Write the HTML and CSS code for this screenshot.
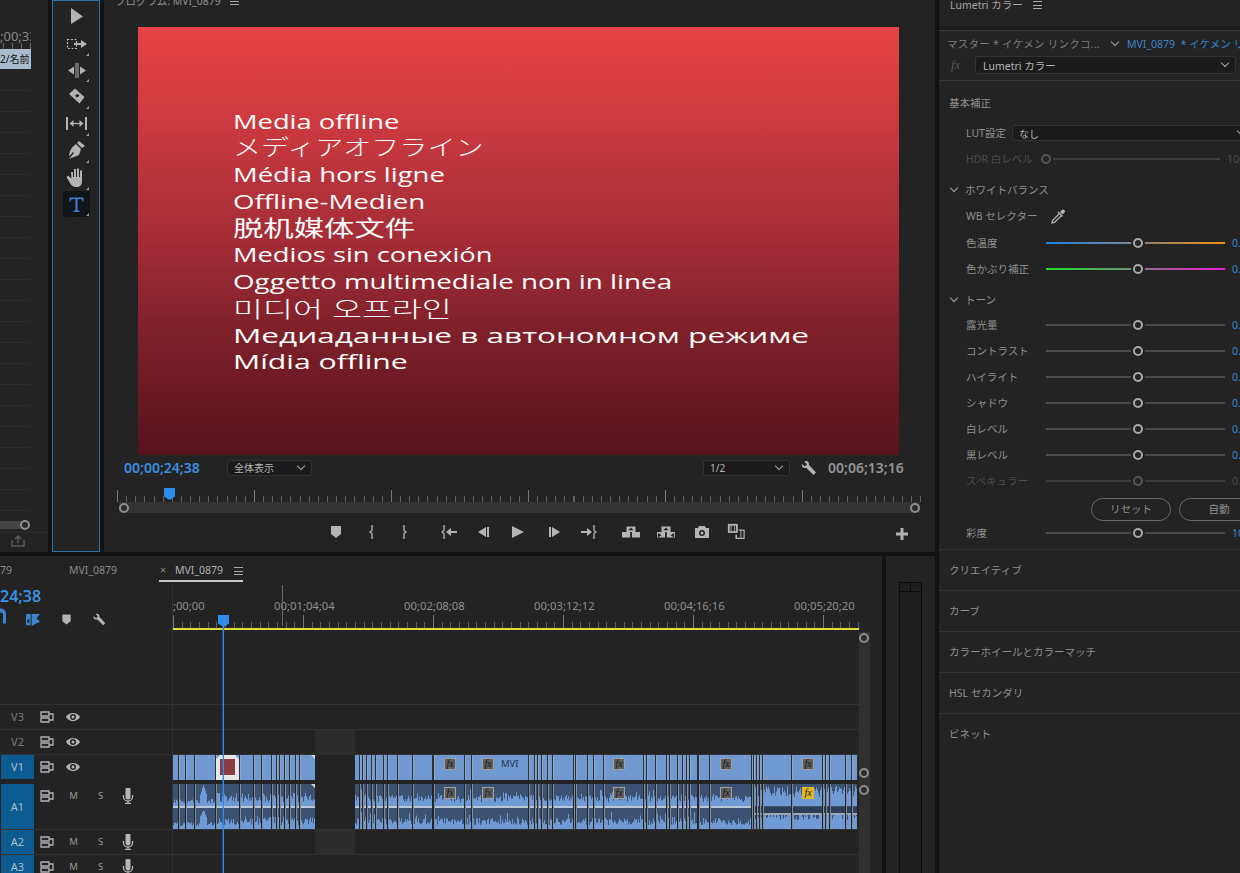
FILE: index.html
```html
<!DOCTYPE html>
<html lang="ja">
<head>
    <meta charset="UTF-8">
    <title>Premiere Pro - MVI_0879</title>
    <link rel="stylesheet" href="styles.css">
</head>
<body>
    <svg class="icon-defs" width="0" height="0">
        <symbol id="i-marker" viewBox="0 0 18 18"><path d="M4 3h10v8l-5 4-5-4z"/></symbol>
        <symbol id="i-in" viewBox="0 0 18 18"><path class="ln" d="M10 3H9v4.500L7 9l2 1.500V15h1"/></symbol>
        <symbol id="i-out" viewBox="0 0 18 18"><path class="ln" d="M8 3h1v4.500L11 9l-2 1.500V15H8"/></symbol>
        <symbol id="i-goin" viewBox="0 0 18 18"><path class="ln" d="M4 3H3v4.500L1 9l2 1.500V15h1"/><path d="M5 9l5-4v3h6v2h-6v3z"/></symbol>
        <symbol id="i-goout" viewBox="0 0 18 18"><path class="ln" d="M14 3h1v4.500L17 9l-2 1.500V15h-1"/><path d="M13 9L8 5v3H2v2h6v3z"/></symbol>
        <symbol id="i-back" viewBox="0 0 18 18"><path d="M3 9l8-5v10zM12 4h2v10h-2z"/></symbol>
        <symbol id="i-fwd" viewBox="0 0 18 18"><path d="M15 9L7 4v10zM4 4h2v10H4z"/></symbol>
        <symbol id="i-play" viewBox="0 0 18 18"><path d="M3 3l12 6-12 6z"/></symbol>
        <symbol id="i-lift" viewBox="0 0 20 18"><path d="M5 3h10v6H5zM0 9h9v6H0zM11 9h9v6h-9z"/><path class="cut" d="M10 4l3 3H7z"/></symbol>
        <symbol id="i-extract" viewBox="0 0 20 18"><path d="M5 3h10v6H5zM0 9h9v6H0zM11 9h9v6h-9z"/><path class="cut" d="M10 4l3 3H7zM1 10l4 2.500L1 15zM19 10l-4 2.500 4 2.500z"/></symbol>
        <symbol id="i-camera" viewBox="0 0 18 18"><path d="M2 5h3l1-2h6l1 2h3v10H2z"/><circle class="cut" cx="9" cy="10" r="3"/><circle cx="9" cy="10" r="1.500"/></symbol>
        <symbol id="i-compare" viewBox="0 0 20 20"><path d="M1 1h11v10H1z"/><path class="cut" d="M3 3h7v6H3z"/><path d="M4 3h1v6H4zM8 3h1v6H8z"/><path class="ln" d="M13 8h6v9h-9v-4"/><path d="M10 13h1v4h-1zM15 8h1v9h-1z"/></symbol>
        <symbol id="i-plus" viewBox="0 0 18 18"><path d="M7.500 3h3v4.500H15v3h-4.500V15h-3v-4.500H3v-3h4.500z"/></symbol>
        <symbol id="i-wrench" viewBox="0 0 18 18"><path d="M2 5l3 2.500 2-2L4.500 2.500C7 1 9.500 3 9 6l7 7.500-2.500 2.500L6.500 9C3.500 9.500 1 7.500 2 5z"/></symbol>
        <symbol id="i-track" viewBox="0 0 14 12"><path class="ln" d="M1 1h8v4H1zM1 7h8v4H1zM9 3h4v6H9"/></symbol>
        <symbol id="i-eye" viewBox="0 0 14 12"><path d="M0 6c3-5.500 11-5.500 14 0-3 5.500-11 5.500-14 0z"/><circle class="cut" cx="7" cy="6" r="3"/><circle cx="7" cy="6" r="1.500"/></symbol>
        <symbol id="i-mic" viewBox="0 0 12 16"><path d="M3.500 1.500a2.500 2.500 0 0 1 5 0V9a2.500 2.500 0 0 1-5 0z"/><path class="ln" d="M1.500 7v2a4.500 4 0 0 0 9 0V7M6 13v2M3 15.500h6"/></symbol>
        <symbol id="i-dropper" viewBox="0 0 16 16"><path d="M10 4l2.500 2.500 2-2c1.500-1.500-1-4-2.500-2.500z"/><path d="M8.500 3.500l4.500 4.500-1 1-4.500-4.500z"/><path class="ln" d="M9 6L2.500 12.500 2 15l2.500-.5L11 8"/></symbol>
        <symbol id="i-selarrow" viewBox="0 0 27 27"><path d="M8 5l12 8.500L8 21z"/></symbol>
        <symbol id="i-seltrack" viewBox="0 0 27 27"><path class="dash" d="M4.500 9.500h9v9h-9z"/><path d="M11 13h7v-3l6 4-6 4v-3h-7z"/></symbol>
        <symbol id="i-ripple" viewBox="0 0 27 27"><path d="M12.500 6h1v15h-1zM14.500 6h1v15h-1zM5 13.500l6-4v8zM23 13.500l-6-4v8z"/></symbol>
        <symbol id="i-razor" viewBox="0 0 27 27"><path d="M12 5.500l9.500 8.500-5 6.500L6 11z"/><path class="cut" d="M12 12l3-1 1.500 2-3 1.500z"/></symbol>
        <symbol id="i-slip" viewBox="0 0 27 27"><path d="M3 7h2v13H3zM22 7h2v13h-2z"/><path class="ln" d="M9 13.500h9"/><path d="M6.500 13.500l4-3.500v7zM20.500 13.500l-4-3.500v7z"/></symbol>
        <symbol id="i-pen" viewBox="0 0 27 27"><path d="M16 4l6 5-3 2-5-5zM13 7l5 5-2 6c-3 1.500-7 2.500-10 4l5-6-1-1-4 4.500c0-3 1-6 3-9z"/></symbol>
        <symbol id="i-hand" viewBox="0 0 27 27"><path d="M8 8h2v5h1V5h2v8h1V4.500h2V13h1V6.500h2V17c0 4-2 6-5.500 6-4 0-5-2-6.500-4L4 14c-1-1.500 1-2.500 2-1.500l2.500 2z"/></symbol>
        <symbol id="i-type" viewBox="0 0 27 27"><path d="M6.500 6.500h14v4h-1c0-1.500-.5-2.500-2-2.500h-3v11.500h2V21h-6v-1.500h2V8h-3c-1.500 0-2 1-2 2.500h-1z"/></symbol>
    </svg>

    <div class="app">
        <div class="main-col">
            <div class="top-row">
                <section class="panel media-panel">
                    <div class="media-inner">
                        <div class="media-clipbox">
                            <div class="media-time">;00;33</div>
                            <div class="media-ticks"></div>
                            <div class="media-clip">2/名前</div>
                            <div class="media-rows"></div>
                        </div>
                        <div class="media-scroll"><span class="knob"></span></div>
                    </div>
                    <div class="media-foot">
                        <svg class="share-icon" width="14" height="12" viewBox="0 0 14 12"><path d="M1 5v6h12V5M7 8V2M4 4l3-3 3 3" fill="none" stroke="#5a5a5a" stroke-width="1.500"/></svg>
                    </div>
                </section>

                <section class="panel tools-panel">
                    <div class="tool"><svg><use href="#i-selarrow"/></svg></div>
                    <div class="tool has-more"><svg><use href="#i-seltrack"/></svg></div>
                    <div class="tool has-more"><svg><use href="#i-ripple"/></svg></div>
                    <div class="tool has-more"><svg><use href="#i-razor"/></svg></div>
                    <div class="tool has-more"><svg><use href="#i-slip"/></svg></div>
                    <div class="tool has-more"><svg><use href="#i-pen"/></svg></div>
                    <div class="tool has-more"><svg><use href="#i-hand"/></svg></div>
                    <div class="tool has-more tool-active"><svg><use href="#i-type"/></svg></div>
                </section>

                <section class="panel program-panel">
                    <div class="program-title">プログラム: MVI_0879 <span class="menu-lines"></span></div>
                    <div class="video">
                        <p class="offline l-en">Media offline</p>
                        <p class="offline l-ja">メディアオフライン</p>
                        <p class="offline l-fr">Média hors ligne</p>
                        <p class="offline l-de">Offline-Medien</p>
                        <p class="offline l-zh" lang="zh">脱机媒体文件</p>
                        <p class="offline l-es">Medios sin conexión</p>
                        <p class="offline l-it">Oggetto multimediale non in linea</p>
                        <p class="offline l-ko" lang="ko">미디어 오프라인</p>
                        <p class="offline l-ru">Медиаданные в автономном режиме</p>
                        <p class="offline l-pt">Mídia offline</p>
                    </div>
                    <div class="monitor-bar">
                        <span class="timecode">00;00;24;38</span>
                        <div class="select fit-select">全体表示<span class="chev"></span></div>
                        <div class="select res-select">1/2<span class="chev"></span></div>
                        <svg class="ico wrench-ico"><use href="#i-wrench"/></svg>
                        <span class="duration">00;06;13;16</span>
                    </div>
                    <div class="monitor-ruler"><span class="mon-playhead"></span></div>
                    <div class="monitor-scroll"><span class="knob knob-l"></span><span class="knob knob-r"></span></div>
                    <div class="transport">
                        <svg class="ico"><use href="#i-marker"/></svg>
                        <svg class="ico"><use href="#i-in"/></svg>
                        <svg class="ico"><use href="#i-out"/></svg>
                        <svg class="ico"><use href="#i-goin"/></svg>
                        <svg class="ico"><use href="#i-back"/></svg>
                        <svg class="ico"><use href="#i-play"/></svg>
                        <svg class="ico"><use href="#i-fwd"/></svg>
                        <svg class="ico"><use href="#i-goout"/></svg>
                        <svg class="ico"><use href="#i-lift"/></svg>
                        <svg class="ico"><use href="#i-extract"/></svg>
                        <svg class="ico"><use href="#i-camera"/></svg>
                        <svg class="ico"><use href="#i-compare"/></svg>
                        <svg class="ico ico-plus"><use href="#i-plus"/></svg>
                    </div>
                </section>
            </div>

            <div class="bottom-row">
                <section class="panel timeline-panel">
                    <div class="tabs">
                        <span class="tab tab-cut">79</span>
                        <span class="tab tab-other">MVI_0879</span>
                        <div class="tab-active"><span class="tab-x">×</span><span class="tab-name">MVI_0879</span><span class="menu-lines"></span></div>
                    </div>
                    <div class="tl-body">
                        <div class="tl-area">
                            <div class="tl-top">
                                <div class="tl-head">
                                    <div class="tl-time">24;38</div>
                                    <div class="tl-tools">
                                        <svg class="tl-ico blue" viewBox="0 0 10 14"><path d="M-4 1a5 5 0 0 1 10 0v10H3V2a2 2 0 0 0-4 0z"/></svg>
                                        <svg class="tl-ico blue" viewBox="0 0 16 14"><path d="M0 1h5v12H0zM6 1h9l-4 5 4 3-9 5z"/><path class="cut" d="M1.500 7h2v4h-2z"/></svg>
                                        <svg class="tl-ico gray" viewBox="0 0 18 18"><use href="#i-marker"/></svg>
                                        <svg class="tl-ico gray" viewBox="0 0 18 18"><use href="#i-wrench"/></svg>
                                    </div>
                                </div>
                                <div class="tl-ruler">
                                    <div class="tl-labels">
                                        <span class="tl-label">00;00;00;00</span>
                                        <span class="tl-label">00;01;04;04</span>
                                        <span class="tl-label">00;02;08;08</span>
                                        <span class="tl-label">00;03;12;12</span>
                                        <span class="tl-label">00;04;16;16</span>
                                        <span class="tl-label">00;05;20;20</span>
                                    </div>
                                    <div class="tl-ticks"></div>
                                    <div class="tl-workarea"></div>
                                </div>
                            </div>

                            <div class="track">
                                <div class="track-head"><span class="track-name">V3</span><svg class="t-ico"><use href="#i-track"/></svg><svg class="t-ico"><use href="#i-eye"/></svg></div>
                                <div class="lane"></div>
                            </div>
                            <div class="track">
                                <div class="track-head"><span class="track-name">V2</span><svg class="t-ico"><use href="#i-track"/></svg><svg class="t-ico"><use href="#i-eye"/></svg></div>
                                <div class="lane lane-gap"></div>
                            </div>
                            <div class="track track-v1">
                                <div class="track-head"><span class="track-name on">V1</span><svg class="t-ico"><use href="#i-track"/></svg><svg class="t-ico"><use href="#i-eye"/></svg></div>
                                <div class="lane" id="laneV1"></div>
                            </div>
                            <div class="track track-a1">
                                <div class="track-head"><span class="track-name on">A1</span><svg class="t-ico"><use href="#i-track"/></svg><span class="t-btn">M</span><span class="t-btn">S</span><svg class="t-mic"><use href="#i-mic"/></svg></div>
                                <div class="lane" id="laneA1"></div>
                            </div>
                            <div class="track">
                                <div class="track-head"><span class="track-name on">A2</span><svg class="t-ico"><use href="#i-track"/></svg><span class="t-btn">M</span><span class="t-btn">S</span><svg class="t-mic"><use href="#i-mic"/></svg></div>
                                <div class="lane lane-gap"></div>
                            </div>
                            <div class="track">
                                <div class="track-head"><span class="track-name on">A3</span><svg class="t-ico"><use href="#i-track"/></svg><span class="t-btn">M</span><span class="t-btn">S</span><svg class="t-mic"><use href="#i-mic"/></svg></div>
                                <div class="lane"></div>
                            </div>

                            <span class="hover-line"></span>
                            <span class="tl-playhead"></span>
                        </div>
                        <div class="tl-vscroll">
                            <span class="knob vk-1"></span>
                            <span class="knob vk-2"></span>
                            <span class="knob vk-3"></span>
                        </div>
                    </div>
                </section>

                <section class="panel meter-panel">
                    <div class="meter"><div class="meter-cap"><span></span><span></span></div></div>
                </section>
            </div>
        </div>

        <aside class="panel lumetri">
            <div class="lm-header">Lumetri カラー <span class="menu-lines"></span></div>
            <div class="lm-strip"></div>
            <div class="lm-clips">
                <span class="lm-master">マスター * イケメン リンクコ...</span>
                <span class="chev chev-plain"></span>
                <span class="lm-clipname">MVI_0879 &nbsp;* イケメン リンクコネクト</span>
            </div>
            <div class="lm-fx">
                <span class="fx-mark">fx</span>
                <div class="select lm-select">Lumetri カラー<span class="chev"></span></div>
            </div>

            <div class="lm-title">基本補正</div>
            <div class="lm-row lm-lut">
                <span class="lm-label lut-label">LUT設定</span>
                <div class="select lut-select">なし<span class="chev"></span></div>
            </div>
            <div class="lm-row dim">
                <span class="lm-label hdr-label">HDR 白レベル</span>
                <div class="slider hdr-slider"><span class="handle"></span></div>
                <span class="lm-value">100</span>
            </div>

            <div class="lm-group"><span class="chev chev-plain"></span>ホワイトバランス</div>
            <div class="lm-row lm-wb">
                <span class="lm-label wb-label">WB セレクター</span>
                <svg class="dropper"><use href="#i-dropper"/></svg>
            </div>
            <div class="lm-row lm-temp">
                <span class="lm-label">色温度</span>
                <div class="slider temp"><span class="handle"></span></div>
                <span class="lm-value">0.0</span>
            </div>
            <div class="lm-row">
                <span class="lm-label">色かぶり補正</span>
                <div class="slider tint"><span class="handle"></span></div>
                <span class="lm-value">0.0</span>
            </div>

            <div class="lm-group"><span class="chev chev-plain"></span>トーン</div>
            <div class="lm-row"><span class="lm-label">露光量</span><div class="slider"><span class="handle"></span></div><span class="lm-value">0.0</span></div>
            <div class="lm-row"><span class="lm-label">コントラスト</span><div class="slider"><span class="handle"></span></div><span class="lm-value">0.0</span></div>
            <div class="lm-row"><span class="lm-label">ハイライト</span><div class="slider"><span class="handle"></span></div><span class="lm-value">0.0</span></div>
            <div class="lm-row"><span class="lm-label">シャドウ</span><div class="slider"><span class="handle"></span></div><span class="lm-value">0.0</span></div>
            <div class="lm-row"><span class="lm-label">白レベル</span><div class="slider"><span class="handle"></span></div><span class="lm-value">0.0</span></div>
            <div class="lm-row"><span class="lm-label">黒レベル</span><div class="slider"><span class="handle"></span></div><span class="lm-value">0.0</span></div>
            <div class="lm-row dim"><span class="lm-label">スペキュラー</span><div class="slider"><span class="handle"></span></div><span class="lm-value">0.0</span></div>
            <div class="lm-buttons"><span class="pill">リセット</span><span class="pill">自動</span></div>
            <div class="lm-row"><span class="lm-label">彩度</span><div class="slider"><span class="handle"></span></div><span class="lm-value">100.0</span></div>

            <div class="lm-section first">クリエイティブ</div>
            <div class="lm-section">カーブ</div>
            <div class="lm-section">カラーホイールとカラーマッチ</div>
            <div class="lm-section">HSL セカンダリ</div>
            <div class="lm-section">ビネット</div>
        </aside>
    </div>

    <script src="script.js"></script>
</body>
</html>
```

FILE: styles.css
```css
* {
    box-sizing: border-box;
}
html, body {
    margin: 0;
    height: 100%;
    overflow: hidden;
    background-color: #111213;
}
body {
    font-family: "Noto Sans", "Noto Sans CJK JP", sans-serif;
    font-size: 10.5px;
    color: #9a9a9a;
}
.icon-defs {
    position: absolute;
}
svg {
    fill: #b4b4b4;
}
.ln {
    fill: none;
    stroke: #b4b4b4;
    stroke-width: 1.3;
}
.cut {
    fill: #232323;
}
.dash {
    fill: none;
    stroke: #b4b4b4;
    stroke-width: 1.2;
    stroke-dasharray: 2 1.500;
}
.app {
    display: flex;
    width: 1240px;
    height: 873px;
}
.main-col {
    width: 935px;
    margin-right: 4px;
    display: flex;
    flex-direction: column;
}
.panel {
    background-color: #232323;
    overflow: hidden;
}
.top-row {
    display: flex;
    height: 552px;
    margin-bottom: 4px;
}
.bottom-row {
    display: flex;
    flex: 1;
    min-height: 0;
}
.menu-lines {
    display: inline-block;
    width: 9px;
    height: 8px;
    margin-left: 6px;
    border-top: 1px solid #aaa;
    border-bottom: 1px solid #aaa;
    background: linear-gradient(#aaa, #aaa) 0 2.500px / 100% 1px no-repeat;
}
.knob {
    display: block;
    width: 10px;
    height: 10px;
    border: 2px solid #8f8f8f;
    border-radius: 50%;
    background-color: #2c2c2c;
}
.chev {
    position: absolute;
    right: 7px;
    top: 50%;
    width: 6px;
    height: 6px;
    margin-top: -5px;
    border-right: 1px solid #a5a5a5;
    border-bottom: 1px solid #a5a5a5;
    transform: rotate(45deg);
}
.chev-plain {
    position: static;
    display: inline-block;
    margin: 0;
    flex: none;
}
.select {
    position: relative;
    display: flex;
    align-items: center;
    height: 16px;
    padding-left: 6px;
    border: 1px solid #333;
    border-radius: 3px;
    background-color: #1b1b1b;
    color: #b5b5b5;
    font-size: 10px;
}

/* media panel on the far left */
.media-panel {
    width: 48px;
    margin-right: 4px;
    display: flex;
    flex-direction: column;
}
.media-inner {
    flex: 1;
    padding-top: 29px;
}
.media-clipbox {
    width: 31px;
    overflow: hidden;
}
.media-time {
    height: 14px;
    line-height: 14px;
    font-size: 13px;
    white-space: nowrap;
    color: #8a8a8a;
}
.media-ticks {
    height: 6px;
    background: repeating-linear-gradient(90deg, #666 0 1px, transparent 1px 9px) 3px 0;
}
.media-clip {
    height: 20px;
    line-height: 20px;
    background-color: #a9bccd;
    color: #111;
    font-size: 10px;
    white-space: nowrap;
}
.media-rows {
    height: 452px;
    background: repeating-linear-gradient(transparent 0 20px, #2c2c2c 20px 21px);
    background-position: 0 1px;
}
.media-scroll {
    position: relative;
    width: 25px;
    height: 8px;
    background-color: #444;
}
.media-scroll .knob {
    position: absolute;
    right: -5px;
    top: -1px;
}
.media-foot {
    height: 20px;
    border-top: 1px solid #2c2c2c;
    padding: 2px 0 0 11px;
}

/* tools */
.tools-panel {
    width: 48px;
    margin-right: 4px;
    padding-top: 2px;
    border: 1px solid #2f6fa8;
    display: flex;
    flex-direction: column;
    align-items: center;
}
.tool {
    position: relative;
    width: 27px;
    height: 26.800px;
    flex: none;
}
.tool svg {
    width: 27px;
    height: 27px;
    display: block;
}
.tool.has-more::after {
    content: "";
    position: absolute;
    right: 1px;
    bottom: 1px;
    border-left: 3px solid transparent;
    border-bottom: 3px solid #9a9a9a;
}
.tool-active {
    background-color: #11151a;
    border-radius: 3px;
}
.tool-active svg {
    fill: #3a85cc;
}

/* program monitor */
.program-panel {
    flex: 1;
    display: flex;
    flex-direction: column;
    align-items: flex-start;
}
.program-title {
    height: 27px;
    margin-top: -6px;
    margin-bottom: 6px;
    padding-left: 11px;
    line-height: 14px;
    color: #8f8f8f;
    white-space: nowrap;
}
.video {
    width: 761px;
    height: 428px;
    margin-left: 34px;
    padding: 81px 0 0 95px;
    background: linear-gradient(#e64346, #cf3b40 20%, #a32c36 50%, #7d2029 72%, #57121e);
    overflow: hidden;
}
.offline {
    margin: 0;
    height: 26.700px;
    line-height: 26.700px;
    color: #fff;
    font-family: "Open Sans", "Noto Sans CJK JP", sans-serif;
    font-size: 20.500px;
    font-weight: 500;
    white-space: nowrap;
    transform-origin: left center;
}
.l-en { transform: scaleX(1.332); }
.l-fr { transform: scaleX(1.338); }
.l-de { transform: scaleX(1.348); }
.l-es { transform: scaleX(1.331); }
.l-it { transform: scaleX(1.353); }
.l-ru { transform: scaleX(1.537); }
.l-pt { transform: scaleX(1.474); }
.l-ja {
    font-size: 22px;
    font-weight: 300;
    transform: translateY(-2px) scaleX(1.275);
}
.l-zh {
    font-family: "Noto Sans CJK SC", sans-serif;
    font-size: 22px;
    font-weight: 400;
    transform: translateY(-2px) scaleX(1.38);
}
.l-ko {
    font-family: "Noto Sans CJK KR", sans-serif;
    font-size: 22px;
    font-weight: 300;
    transform: translateY(-1px) scaleX(1.48);
}
.monitor-bar {
    position: relative;
    display: flex;
    align-items: center;
    height: 25px;
    width: 100%;
    padding-left: 20px;
    font-size: 14px;
}
.timecode {
    width: 103px;
    color: #3b8ee0;
    font-weight: 600;
}
.fit-select {
    width: 85px;
}
.res-select {
    width: 87px;
    margin-left: 391px;
}
.wrench-ico {
    margin-left: 10px;
    width: 18px;
    height: 18px;
}
.duration {
    margin-left: 10px;
    font-weight: 600;
    color: #959595;
}
.monitor-ruler {
    position: relative;
    width: 804px;
    height: 12px;
    margin: 10px 0 0 13px;
    background:
        repeating-linear-gradient(90deg, #7a7a7a 0 1px, transparent 1px 137px) 0 0 / 100% 100% no-repeat,
        repeating-linear-gradient(90deg, #5f5f5f 0 1px, transparent 1px 9.130px) 0 6px / 100% 6px no-repeat;
}
.mon-playhead {
    position: absolute;
    left: 47px;
    top: -2px;
    width: 11px;
    height: 12px;
    background-color: #2f8ceb;
    clip-path: polygon(0 0, 100% 0, 100% 70%, 50% 100%, 0 70%);
}
.monitor-scroll {
    display: flex;
    justify-content: space-between;
    align-items: center;
    width: 801px;
    height: 11px;
    margin-left: 15px;
    background-color: #333;
}
.transport {
    display: grid;
    grid-template-columns: 36px 32px 46px 34px 34px 36px 34px 43px 35px 36px 34px 166px 18px;
    align-items: center;
    height: 18px;
    margin-top: 8px;
    padding-left: 223px;
}
.ico {
    width: 18px;
    height: 18px;
    overflow: visible;
}
.ico-plus {
    margin-top: 4px;
}

/* timeline */
.timeline-panel {
    width: 882px;
    margin-right: 4px;
    display: flex;
    flex-direction: column;
}
.tabs {
    position: relative;
    display: flex;
    height: 29px;
    padding-top: 6px;
    line-height: 16px;
    color: #8a8a8a;
    font-size: 10.500px;
}
.tab-cut {
    width: 69px;
}
.tab-other {
    width: 90px;
}
.tab-active {
    display: flex;
    width: 84px;
    height: 20px;
    border-bottom: 2px solid #c8c8c8;
    color: #b0b0b0;
}
.tab-x {
    width: 16px;
    padding-left: 1px;
    color: #8a8a8a;
}
.tab-name {
    width: 58px;
}
.tab-active .menu-lines {
    margin: 5px 0 0 1px;
}
.tl-body {
    display: flex;
    flex: 1;
    min-height: 0;
}
.tl-area {
    position: relative;
    width: 859px;
    overflow: hidden;
}
.tl-top {
    display: flex;
    height: 120px;
    border-bottom: 1px solid #333;
}
.tl-head {
    width: 173px;
    height: 100%;
    border-right: 1px solid #333;
    padding-top: 2px;
    flex: none;
}
.tl-time {
    height: 18px;
    line-height: 18px;
    color: #3b8ee0;
    font-size: 16px;
    font-weight: 600;
}
.tl-tools {
    position: relative;
    display: grid;
    grid-template-columns: 24px 35px 33px 20px;
    align-items: center;
    margin-top: 7px;
}
.tl-ico {
    width: 15px;
    height: 15px;
    overflow: visible;
}
.tl-ico.blue {
    fill: #3a85cc;
}
.tl-ico.blue:first-child {
    width: 10px;
}
.tl-ico.blue:nth-child(2) {
    margin-left: 2px;
}
.tl-ruler {
    position: relative;
    flex: 1;
    overflow: hidden;
}
.tl-labels {
    display: flex;
    height: 30px;
    padding-top: 14px;
    margin-left: -29px;
    line-height: 14px;
    font-size: 11.300px;
    color: #8f8f8f;
    white-space: nowrap;
}
.tl-label {
    width: 130px;
    flex: none;
}
.tl-ticks {
    height: 13px;
    background:
        repeating-linear-gradient(90deg, #777 0 1px, transparent 1px 130px) 0 0 / 100% 100% no-repeat,
        repeating-linear-gradient(90deg, #5f5f5f 0 1px, transparent 1px 8.667px) 0 7px / 100% 6px no-repeat;
}
.tl-workarea {
    height: 2px;
    background-color: #dede3a;
}
.track {
    display: flex;
    height: 25px;
    border-bottom: 1px solid #333;
}
.track-v1 {
    height: 29px;
    border-bottom: 0;
}
.track-a1 {
    height: 46px;
}
.track-head {
    position: relative;
    display: flex;
    align-items: flex-start;
    width: 173px;
    flex: none;
    border-right: 1px solid #333;
    padding-top: 6px;
}
.track-name {
    width: 33px;
    height: 24px;
    margin: -6px 0 0 1px;
    text-align: center;
    line-height: 24px;
    color: #7c7c7c;
    font-size: 11px;
}
.track-name.on {
    background-color: #0b5a90;
    color: #aebfcd;
}
.track-a1 .track-name {
    height: 45px;
    line-height: 45px;
}
.t-ico {
    width: 14px;
    height: 12px;
    margin: 0 6px;
    overflow: visible;
}
.t-btn {
    width: 27px;
    line-height: 12px;
    text-align: center;
    font-size: 9.500px;
    color: #9a9a9a;
}
.t-btn:first-of-type {
    margin-left: -1px;
}
.t-mic {
    width: 12px;
    height: 16px;
    margin: -2px 0 0 8px;
}
.lane {
    position: relative;
    flex: 1;
}
.lane-gap::before {
    content: "";
    position: absolute;
    left: 142px;
    top: 0;
    bottom: -1px;
    width: 40px;
    background-color: #2c2c2c;
}
.clip {
    position: absolute;
    top: 0;
    display: block;
}
.fx-badge {
    position: absolute;
    width: 12px;
    height: 12px;
    line-height: 10px;
    text-align: center;
    border: 1px solid #a0a0a0;
    background-color: #5f5f5f;
    color: #161616;
    font-family: "Liberation Serif", serif;
    font-style: italic;
    font-size: 10px;
}
.fx-badge.gold {
    border-color: #e3b722;
    background-color: #e3b722;
}
.clip-name {
    position: absolute;
    top: 2px;
    left: 328px;
    font-size: 9.500px;
    line-height: 14px;
    color: #203350;
}
.hover-line {
    position: absolute;
    left: 282px;
    top: 0;
    width: 1px;
    height: 41px;
    background-color: #6a6a6a;
}
.tl-playhead {
    position: absolute;
    left: 223px;
    top: 37px;
    bottom: 0;
    width: 1px;
    background-color: #2f8ceb;
    box-shadow: -1px 0 0 rgba(47, 140, 235, .4);
}
.tl-playhead::before {
    content: "";
    position: absolute;
    left: -5px;
    top: -7px;
    width: 11px;
    height: 12px;
    background-color: #2f8ceb;
    clip-path: polygon(0 0, 100% 0, 100% 70%, 50% 100%, 0 70%);
}
.tl-vscroll {
    position: relative;
    width: 11px;
    margin-top: 47px;
    background-color: #303030;
}
.tl-vscroll .knob {
    position: absolute;
    left: 0;
}
.vk-1 {
    top: 1px;
}
.vk-2 {
    top: 136px;
}
.vk-3 {
    top: 153px;
}

/* audio meter */
.meter-panel {
    flex: 1;
    padding: 26px 13px 0 13px;
}
.meter {
    height: 100%;
    border-left: 1px solid #0c0c0c;
    border-right: 1px solid #0c0c0c;
    border-top: 1px solid #0c0c0c;
    background-color: #1e1e1e;
}
.meter-cap {
    display: flex;
    height: 9px;
    border-bottom: 1px solid #0c0c0c;
}
.meter-cap span {
    flex: 1;
}
.meter-cap span:first-child {
    border-right: 1px solid #0c0c0c;
}

/* lumetri */
.lumetri {
    width: 301px;
    flex: none;
}
.lm-header {
    height: 26px;
    padding-left: 11px;
    line-height: 11px;
    color: #a5a5a5;
}
.lm-header .menu-lines {
    margin-left: 7px;
}
.lm-strip {
    height: 5px;
    background-color: #1d1d1d;
    border-bottom: 1px solid #3a3a3a;
}
.lm-clips {
    display: flex;
    align-items: center;
    height: 24px;
    padding-left: 8px;
    white-space: nowrap;
    color: #7d7d7d;
}
.lm-master {
    width: 165px;
    flex: none;
    letter-spacing: .25px;
}
.lm-clips .chev-plain {
    margin-top: -3px;
    margin-right: 9px;
}
.lm-clipname {
    color: #3a85cc;
}
.lm-fx {
    display: flex;
    align-items: flex-start;
    height: 26px;
    padding: 1px 0 0 12px;
    border-bottom: 1px solid #3a3a3a;
}
.fx-mark {
    width: 24px;
    color: #555;
    font-family: "Liberation Serif", serif;
    font-style: italic;
    font-size: 13px;
    line-height: 17px;
}
.lm-select {
    width: 261px;
    height: 18px;
    padding-left: 7px;
    font-size: 10.500px;
}
.lm-title {
    height: 26px;
    margin-top: 9px;
    padding-left: 10px;
    line-height: 26px;
    color: #8f8f8f;
}
.lm-row {
    display: flex;
    align-items: center;
    height: 26px;
    padding-left: 27px;
    white-space: nowrap;
}
.lm-lut {
    margin-top: 4px;
}
.lm-wb,
.lm-temp {
    margin-top: 1px;
}
.lm-label {
    width: 80px;
    flex: none;
    margin-top: -2px;
    color: #8f8f8f;
}
.lut-label {
    width: 46px;
}
.lut-select {
    width: 240px;
    flex: none;
}
.hdr-label {
    width: 75px;
}
.hdr-slider {
    width: 184px;
}
.hdr-slider .handle {
    left: 0;
}
.wb-label {
    width: 84px;
}
.dropper {
    width: 16px;
    height: 16px;
    overflow: visible;
}
.slider {
    position: relative;
    width: 179px;
    height: 2px;
    flex: none;
    background-color: #4a4a4a;
}
.slider.temp {
    background: linear-gradient(90deg, #1f7fe0, #7d8a96 48%, #8f8274 55%, #f0900f);
}
.slider.tint {
    background: linear-gradient(90deg, #18e02a, #74907a 48%, #90708e 55%, #f018d8);
}
.handle {
    position: absolute;
    left: 87px;
    top: -4px;
    width: 10px;
    height: 10px;
    border: 2px solid #a8a8a8;
    border-radius: 50%;
    background-color: #232323;
    box-shadow: 0 0 0 2px #232323;
}
.lm-value {
    margin-left: 7px;
    color: #3a85cc;
}
.dim .lm-label,
.dim .lm-value {
    color: #4c4c4c;
}
.dim .slider {
    background-color: #3c3c3c;
}
.dim .handle {
    border-color: #555;
}
.lm-group {
    display: flex;
    align-items: center;
    gap: 8px;
    height: 26px;
    margin-top: 4px;
    padding-left: 12px;
    color: #8f8f8f;
}
.lm-group .chev-plain {
    margin-top: -3px;
}
.lm-buttons {
    display: flex;
    gap: 8px;
    height: 22px;
    margin-top: 4px;
    padding-left: 152px;
}
.pill {
    flex: none;
    width: 80px;
    height: 23px;
    line-height: 21px;
    text-align: center;
    border: 1px solid #6a6a6a;
    border-radius: 12px;
    color: #8f8f8f;
}
.lm-section {
    height: 41px;
    padding-left: 10px;
    line-height: 40px;
    border-bottom: 1px solid #333;
    color: #8f8f8f;
}
.lm-section.first {
    height: 42px;
    margin-top: 3px;
    border-top: 1px solid #333;
}
.lm-section:last-child {
    border-bottom: 0;
}
```

FILE: script.js
```js
// clip edits on the timeline, in page x coordinates
const CUTS = [178, 185, 194, 215, 239, 253, 261, 271, 276, 279, 284, 289, 295, 299,
    359, 362, 366, 371, 375, 383, 387, 397, 412, 432, 433, 464, 471, 528, 534, 537, 541, 547,
    552, 573, 575, 587, 593, 603, 643, 646, 655, 666, 669, 677, 682, 686, 689, 697, 698, 709,
    751, 753, 756, 759, 762, 791, 822, 825, 829, 845, 851, 857];
const CLIPS = [[173, 315], [355, 858]];
const BADGES = [450, 488, 619, 726, 808];
const LANE_LEFT = 173;

let seed = 17;
function rnd() {
    seed = (seed * 16807) % 2147483647;
    return seed / 2147483647;
}

function amplitude(x) {
    if (x < 215) {
        if (x > 199 && x < 207) return 20 - Math.abs(x - 203) * 3 + rnd() * 2;
        return 3 + rnd() * 4;
    }
    if (x < 315) return 4 + rnd() * 9;
    if (x > 751) return 9 + rnd() * 11;
    return 4 + rnd() * 7 + (rnd() > 0.9 ? 6 : 0);
}

function cutsBetween(start, end, height, dark, light) {
    let out = "";
    CUTS.forEach(function (x) {
        if (x > start && x < end) {
            out += '<rect x="' + x + '" y="0" width="1" height="' + height + '" fill="' + dark + '"/>';
            out += '<rect x="' + (x + 1) + '" y="0" width="1" height="' + height + '" fill="' + light + '"/>';
        }
    });
    return out;
}

function makeSvg(start, end, height, body) {
    const width = end - start;
    return '<svg class="clip" style="left:' + (start - LANE_LEFT) + 'px" width="' + width + '" height="' + height +
        '" viewBox="' + start + ' 0 ' + width + ' ' + height + '">' + body + '</svg>';
}

function notch(end) {
    return '<path d="M' + (end - 4) + ' 0h4v4z" fill="#d8d8d8"/>';
}

function buildVideo() {
    const lane = document.getElementById("laneV1");
    let html = "";
    CLIPS.forEach(function (c) {
        let body = '<rect x="' + c[0] + '" y="0" width="' + (c[1] - c[0]) + '" height="25" fill="#7199d1"/>';
        body += cutsBetween(c[0], c[1], 25, "#2e3238", "#8fa4bf");
        if (c[0] === 173) {
            body += '<path d="M216 4l4-4h15l4 4v21h-23z" fill="#e6e6e6"/>';
            body += '<rect x="220" y="4" width="15" height="16" fill="#8c3a42"/>';
            body += notch(c[1]);
        }
        html += makeSvg(c[0], c[1], 25, body);
    });
    BADGES.forEach(function (x) {
        html += '<span class="fx-badge" style="left:' + (x - 6 - LANE_LEFT) + 'px;top:3px">fx</span>';
    });
    html += '<span class="clip-name">MVI</span>';
    lane.innerHTML = html;
}

function buildAudio() {
    const lane = document.getElementById("laneA1");
    let html = "";
    CLIPS.forEach(function (c) {
        let body = '<rect x="' + c[0] + '" y="0" width="' + (c[1] - c[0]) + '" height="45" fill="#3c5272"/>';
        let wave = "";
        for (let x = c[0]; x < c[1]; x++) {
            const top = Math.min(amplitude(x), 21);
            const low = Math.min(amplitude(x), 18);
            wave += "M" + x + " 22h1v-" + top.toFixed(1) + "h-1z";
            wave += "M" + x + " 45h1v-" + low.toFixed(1) + "h-1z";
        }
        body += '<path d="' + wave + '" fill="#6f9ad6"/>';
        if (c[0] === 355) {
            body += '<rect x="355" y="22" width="396" height="2" fill="#b9c7d8"/>';
            body += '<rect x="751" y="23" width="107" height="6" fill="#2c3e58"/>';
            body += '<rect x="751" y="29" width="107" height="2" fill="#9aa8b8"/>';
        } else {
            body += '<rect x="173" y="22" width="142" height="2" fill="#b9c7d8"/>';
            body += notch(c[1]);
        }
        body += cutsBetween(c[0], c[1], 45, "#23272d", "#808b98");
        html += makeSvg(c[0], c[1], 45, body);
    });
    BADGES.forEach(function (x, i) {
        const gold = i === BADGES.length - 1 ? " gold" : "";
        html += '<span class="fx-badge' + gold + '" style="left:' + (x - 6 - LANE_LEFT) + 'px;top:3px">fx</span>';
    });
    lane.innerHTML = html;
}

buildVideo();
buildAudio();
```
